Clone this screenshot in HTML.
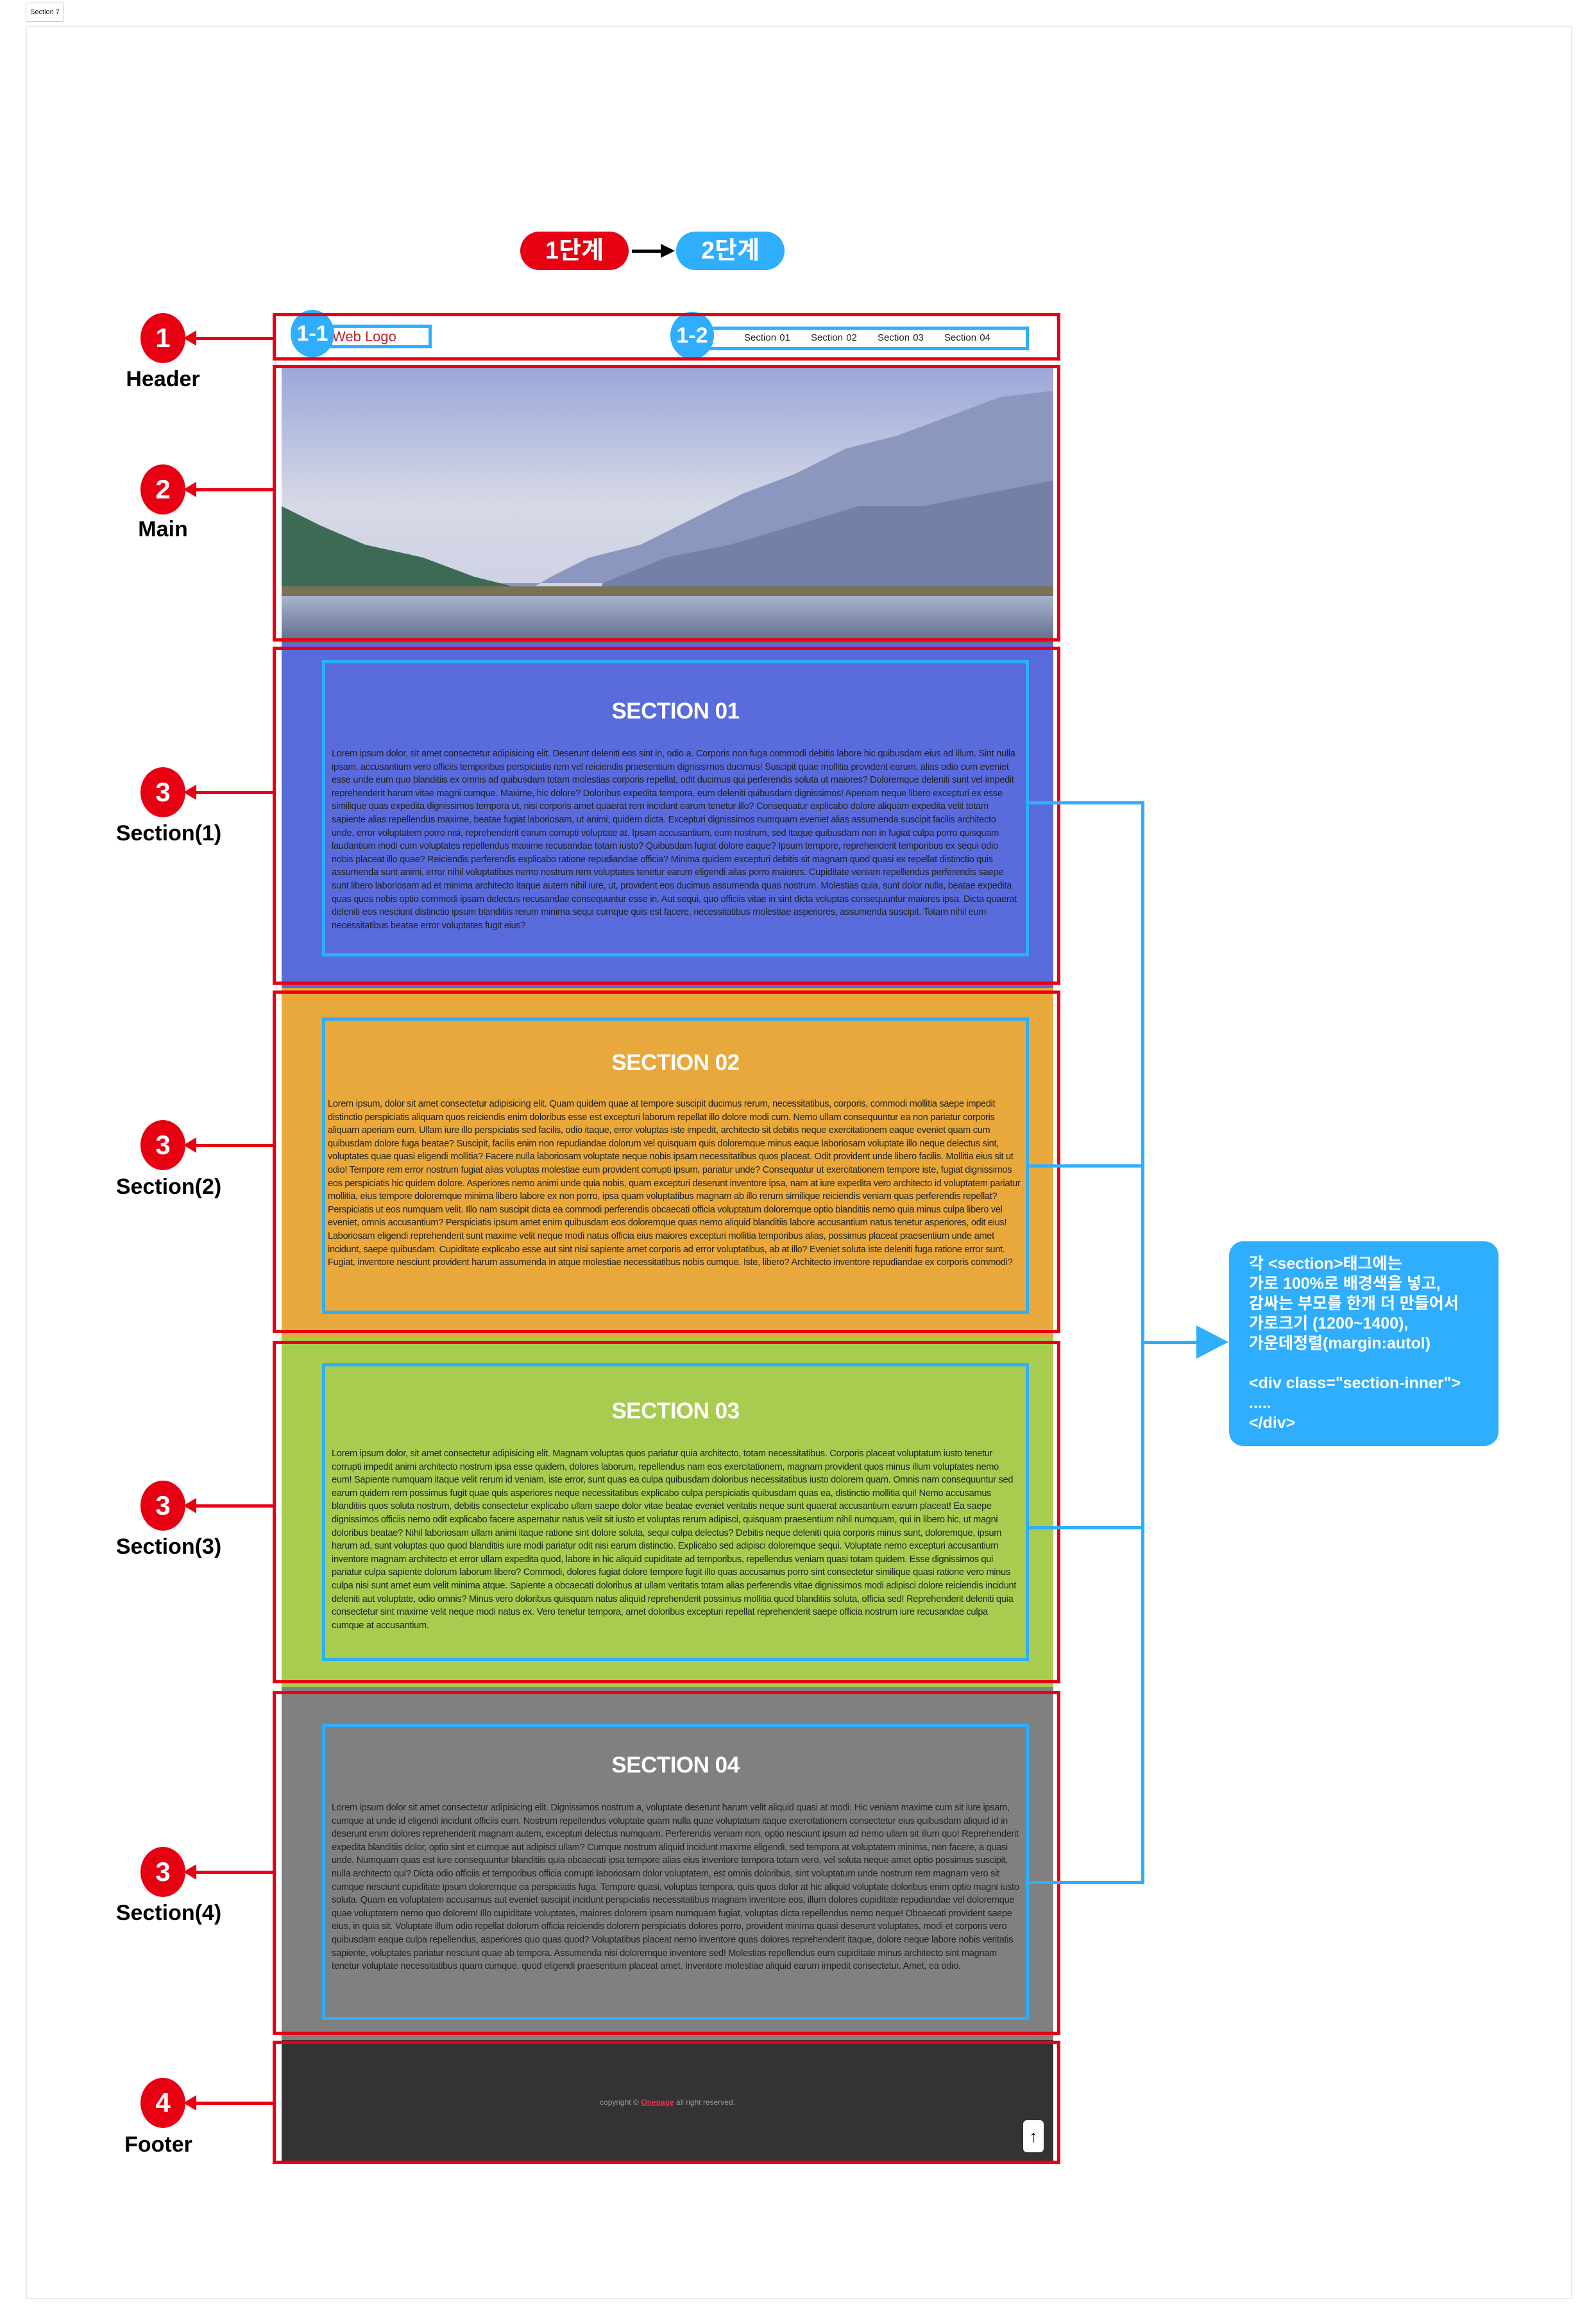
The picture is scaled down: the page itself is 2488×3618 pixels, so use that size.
<!DOCTYPE html>
<html><head><meta charset="utf-8"><style>
*{margin:0;padding:0;box-sizing:border-box}
body{width:2488px;height:3618px;background:#fff;position:relative;font-family:"Liberation Sans","Noto Sans CJK KR",sans-serif;overflow:hidden}
.a{position:absolute}
.red{position:absolute;border:5px solid #e60012}
.inner{position:absolute;border:5px solid #2eaefc;left:502px;width:1102px;padding:0 10px}
.inner h2{color:#fff;font-size:35px;font-weight:bold;text-align:center;letter-spacing:-0.5px}
.inner p{font-size:14.6px;line-height:20.6px;color:#222;letter-spacing:-0.3px}
.circ{position:absolute;width:70px;height:78px;border-radius:50%;background:#e60012;color:#fff;font-weight:bold;font-size:42px;text-align:center;line-height:78px;left:219px}
.lbl{position:absolute;font-weight:bold;font-size:34px;color:#000;text-align:center;width:300px;left:104px}
.arr{position:absolute;left:290px;width:135px;height:5px;background:#e60012}
.arr:before{content:"";position:absolute;left:-4px;top:-10px;border-right:20px solid #e60012;border-top:12px solid transparent;border-bottom:12px solid transparent}
.bl{position:absolute;background:#2eaefc}
.badge{position:absolute;background:#2eaefc;color:#fff;font-weight:bold;font-size:34px;border-radius:50%;text-align:center;width:68px;height:74px;line-height:74px}
</style></head><body>
<div class="a" style="left:40px;top:4px;width:60px;height:30px;border:1px solid #ccc;border-radius:3px;font-size:11px;line-height:28px;text-align:center;color:#222">Section 7</div>
<div class="a" style="left:40px;top:40px;width:2411px;height:3544px;border:2px solid #ececec"></div>

<div class="a" style="left:811px;top:361px;width:169px;height:60px;border-radius:30px;background:#e60012;color:#fff;font-weight:bold;font-size:38px;text-align:center;line-height:60px">1단계</div>
<div class="a" style="left:985px;top:389px;width:50px;height:5px;background:#000"></div>
<div class="a" style="left:1030px;top:380px;border-left:22px solid #000;border-top:11px solid transparent;border-bottom:11px solid transparent"></div>
<div class="a" style="left:1054px;top:361px;width:169px;height:60px;border-radius:30px;background:#2eaefc;color:#fff;font-weight:bold;font-size:38px;text-align:center;line-height:60px">2단계</div>

<div class="a" style="left:439px;top:569px;width:1203px;height:434px;overflow:hidden">
<svg width="1203" height="434" viewBox="0 0 1203 434" preserveAspectRatio="none">
<defs><linearGradient id="sk" x1="0" y1="0" x2="0" y2="1"><stop offset="0" stop-color="#9aa6d8"/><stop offset="0.5" stop-color="#d6d9e6"/><stop offset="1" stop-color="#c8cde0"/></linearGradient>
<linearGradient id="wt" x1="0" y1="0" x2="0" y2="1"><stop offset="0" stop-color="#a9b3cc"/><stop offset="1" stop-color="#5d6a8a"/></linearGradient></defs>
<rect width="1203" height="434" fill="url(#sk)"/>
<path d="M0 230 L40 240 L120 300 L200 330 L300 350 L370 360 L420 330 L480 300 L560 280 L640 240 L720 200 L800 170 L880 130 L960 110 L1040 80 L1120 50 L1203 40 L1203 340 L0 340Z" fill="#8c97c0"/>
<path d="M0 220 L60 250 L130 280 L220 300 L300 330 L380 350 L420 360 L0 360Z" fill="#3d6a55"/>
<path d="M500 340 L600 300 L700 280 L800 250 L900 220 L1000 220 L1100 200 L1203 180 L1203 360 L500 360Z" fill="#7480a8"/>
<rect y="345" width="1203" height="18" fill="#7a7256"/>
<rect y="360" width="1203" height="74" fill="url(#wt)"/>
</svg></div>
<div class="a" style="left:439px;top:1003px;width:1203px;height:537px;background:#5a6bdc"></div>
<div class="a" style="left:439px;top:1540px;width:1203px;height:545px;background:#e8a83c"></div>
<div class="a" style="left:439px;top:2085px;width:1203px;height:545px;background:#a8cc50"></div>
<div class="a" style="left:439px;top:2630px;width:1203px;height:550px;background:#808080"></div>
<div class="a" style="left:439px;top:3180px;width:1203px;height:193px;background:#333"></div>
<div class="a" style="left:439px;top:3270px;width:1203px;text-align:center;font-size:12px;color:#999">copyright © <span style="color:#e0304a;text-decoration:underline;font-weight:bold">Onepage</span> all right reserved.</div>
<div class="a" style="left:1595px;top:3305px;width:32px;height:50px;background:#fff;border-radius:6px;text-align:center;font-size:26px;line-height:50px;color:#000">↑</div>

<div class="a" style="left:513px;top:506px;width:160px;height:37px;border:5px solid #2eaefc"></div>
<div class="a" style="left:518px;top:512px;font-size:22px;color:#c0202a">Web Logo</div>
<div class="a" style="left:1098px;top:509px;width:506px;height:37px;border:5px solid #2eaefc"></div>
<div class="a" style="left:1160px;top:518px;font-size:15px;color:#222;word-spacing:1px;white-space:nowrap"><span style="display:inline-block;width:104px">Section 01</span><span style="display:inline-block;width:104px">Section 02</span><span style="display:inline-block;width:104px">Section 03</span><span>Section 04</span></div>
<div class="badge" style="left:453px;top:483px">1-1</div>
<div class="badge" style="left:1045px;top:486px">1-2</div>

<div class="inner" style="top:1029px;height:462px"><h2 style="margin-top:55px">SECTION 01</h2><p style="margin-top:36px">Lorem ipsum dolor, sit amet consectetur adipisicing elit. Deserunt deleniti eos sint in, odio a. Corporis non fuga commodi debitis labore hic quibusdam eius ad illum. Sint nulla ipsam, accusantium vero officiis temporibus perspiciatis rem vel reiciendis praesentium dignissimos ducimus! Suscipit quae mollitia provident earum, alias odio cum eveniet esse unde eum quo blanditiis ex omnis ad quibusdam totam molestias corporis repellat, odit ducimus qui perferendis soluta ut maiores? Doloremque deleniti sunt vel impedit reprehenderit harum vitae magni cumque. Maxime, hic dolore? Doloribus expedita tempora, eum deleniti quibusdam dignissimos! Aperiam neque libero excepturi ex esse similique quas expedita dignissimos tempora ut, nisi corporis amet quaerat rem incidunt earum tenetur illo? Consequatur explicabo dolore aliquam expedita velit totam sapiente alias repellendus maxime, beatae fugiat laboriosam, ut animi, quidem dicta. Excepturi dignissimos numquam eveniet alias assumenda suscipit facilis architecto unde, error voluptatem porro nisi, reprehenderit earum corrupti voluptate at. Ipsam accusantium, eum nostrum, sed itaque quibusdam non in fugiat culpa porro quisquam laudantium modi cum voluptates repellendus maxime recusandae totam iusto? Quibusdam fugiat dolore eaque? Ipsum tempore, reprehenderit temporibus ex sequi odio nobis placeat illo quae? Reiciendis perferendis explicabo ratione repudiandae officia? Minima quidem excepturi debitis sit magnam quod quasi ex repellat distinctio quis assumenda sunt animi, error nihil voluptatibus nemo nostrum rem voluptates tenetur earum eligendi alias porro maiores. Cupiditate veniam repellendus perferendis saepe sunt libero laboriosam ad et minima architecto itaque autem nihil iure, ut, provident eos ducimus assumenda quas nostrum. Molestias quia, sunt dolor nulla, beatae expedita quas quos nobis optio commodi ipsam delectus recusandae consequuntur esse in. Aut sequi, quo officiis vitae in sint dicta voluptas consequuntur maiores ipsa. Dicta quaerat deleniti eos nesciunt distinctio ipsum blanditiis rerum minima sequi cumque quis est facere, necessitatibus molestiae asperiores, assumenda suscipit. Totam nihil eum necessitatibus beatae error voluptates fugit eius?</p></div>

<div class="inner" style="top:1586px;height:462px;padding:0 4px"><h2 style="margin-top:46px">SECTION 02</h2><p style="margin-top:34px">Lorem ipsum, dolor sit amet consectetur adipisicing elit. Quam quidem quae at tempore suscipit ducimus rerum, necessitatibus, corporis, commodi mollitia saepe impedit distinctio perspiciatis aliquam quos reiciendis enim doloribus esse est excepturi laborum repellat illo dolore modi cum. Nemo ullam consequuntur ea non pariatur corporis aliquam aperiam eum. Ullam iure illo perspiciatis sed facilis, odio itaque, error voluptas iste impedit, architecto sit debitis neque exercitationem eaque eveniet quam cum quibusdam dolore fuga beatae? Suscipit, facilis enim non repudiandae dolorum vel quisquam quis doloremque minus eaque laboriosam voluptate illo neque delectus sint, voluptates quae quasi eligendi mollitia? Facere nulla laboriosam voluptate neque nobis ipsam necessitatibus quos placeat. Odit provident unde libero facilis. Mollitia eius sit ut odio! Tempore rem error nostrum fugiat alias voluptas molestiae eum provident corrupti ipsum, pariatur unde? Consequatur ut exercitationem tempore iste, fugiat dignissimos eos perspiciatis hic quidem dolore. Asperiores nemo animi unde quia nobis, quam excepturi deserunt inventore ipsa, nam at iure expedita vero architecto id voluptatem pariatur mollitia, eius tempore doloremque minima libero labore ex non porro, ipsa quam voluptatibus magnam ab illo rerum similique reiciendis veniam quas perferendis repellat? Perspiciatis ut eos numquam velit. Illo nam suscipit dicta ea commodi perferendis obcaecati officia voluptatum doloremque optio blanditiis nemo quia minus culpa libero vel eveniet, omnis accusantium? Perspiciatis ipsum amet enim quibusdam eos doloremque quas nemo aliquid blanditiis labore accusantium natus tenetur asperiores, odit eius! Laboriosam eligendi reprehenderit sunt maxime velit neque modi natus officia eius maiores excepturi mollitia temporibus alias, possimus placeat praesentium unde amet incidunt, saepe quibusdam. Cupiditate explicabo esse aut sint nisi sapiente amet corporis ad error voluptatibus, ab at illo? Eveniet soluta iste deleniti fuga ratione error sunt. Fugiat, inventore nesciunt provident harum assumenda in atque molestiae necessitatibus nobis cumque. Iste, libero? Architecto inventore repudiandae ex corporis commodi?</p></div>

<div class="inner" style="top:2125px;height:464px"><h2 style="margin-top:50px">SECTION 03</h2><p style="margin-top:36px">Lorem ipsum dolor, sit amet consectetur adipisicing elit. Magnam voluptas quos pariatur quia architecto, totam necessitatibus. Corporis placeat voluptatum iusto tenetur corrupti impedit animi architecto nostrum ipsa esse quidem, dolores laborum, repellendus nam eos exercitationem, magnam provident quos minus illum voluptates nemo eum! Sapiente numquam itaque velit rerum id veniam, iste error, sunt quas ea culpa quibusdam doloribus necessitatibus iusto dolorem quam. Omnis nam consequuntur sed earum quidem rem possimus fugit quae quis asperiores neque necessitatibus explicabo culpa perspiciatis quibusdam quas ea, distinctio mollitia qui! Nemo accusamus blanditiis quos soluta nostrum, debitis consectetur explicabo ullam saepe dolor vitae beatae eveniet veritatis neque sunt quaerat accusantium earum placeat! Ea saepe dignissimos officiis nemo odit explicabo facere aspernatur natus velit sit iusto et voluptas rerum adipisci, quisquam praesentium nihil numquam, qui in libero hic, ut magni doloribus beatae? Nihil laboriosam ullam animi itaque ratione sint dolore soluta, sequi culpa delectus? Debitis neque deleniti quia corporis minus sunt, doloremque, ipsum harum ad, sunt voluptas quo quod blanditiis iure modi pariatur odit nisi earum distinctio. Explicabo sed adipisci doloremque sequi. Voluptate nemo excepturi accusantium inventore magnam architecto et error ullam expedita quod, labore in hic aliquid cupiditate ad temporibus, repellendus veniam quasi totam quidem. Esse dignissimos qui pariatur culpa sapiente dolorum laborum libero? Commodi, dolores fugiat dolore tempore fugit illo quas accusamus porro sint consectetur similique quasi ratione vero minus culpa nisi sunt amet eum velit minima atque. Sapiente a obcaecati doloribus at ullam veritatis totam alias perferendis vitae dignissimos modi adipisci dolore reiciendis incidunt deleniti aut voluptate, odio omnis? Minus vero doloribus quisquam natus aliquid reprehenderit possimus mollitia quod blanditiis soluta, officia sed! Reprehenderit deleniti quia consectetur sint maxime velit neque modi natus ex. Vero tenetur tempora, amet doloribus excepturi repellat reprehenderit saepe officia nostrum iure recusandae culpa cumque at accusantium.</p></div>

<div class="inner" style="top:2687px;height:462px"><h2 style="margin-top:40px">SECTION 04</h2><p style="margin-top:36px">Lorem ipsum dolor sit amet consectetur adipisicing elit. Dignissimos nostrum a, voluptate deserunt harum velit aliquid quasi at modi. Hic veniam maxime cum sit iure ipsam, cumque at unde id eligendi incidunt officiis eum. Nostrum repellendus voluptate quam nulla quae voluptatum itaque exercitationem consectetur eius quibusdam aliquid id in deserunt enim dolores reprehenderit magnam autem, excepturi delectus numquam. Perferendis veniam non, optio nesciunt ipsum ad nemo ullam sit illum quo! Reprehenderit expedita blanditiis dolor, optio sint et cumque aut adipisci ullam? Cumque nostrum aliquid incidunt maxime eligendi, sed tempora at voluptatem minima, non facere, a quasi unde. Numquam quas est iure consequuntur blanditiis quia obcaecati ipsa tempore alias eius inventore tempora totam vero, vel soluta neque amet optio possimus suscipit, nulla architecto qui? Dicta odio officiis et temporibus officia corrupti laboriosam dolor voluptatem, est omnis doloribus, sint voluptatum unde nostrum rem magnam vero sit cumque nesciunt cupiditate ipsum doloremque ea perspiciatis fuga. Tempore quasi, voluptas tempora, quis quos dolor at hic aliquid voluptate doloribus enim optio magni iusto soluta. Quam ea voluptatem accusamus aut eveniet suscipit incidunt perspiciatis necessitatibus magnam inventore eos, illum dolores cupiditate repudiandae vel doloremque quae voluptatem nemo quo dolorem! Illo cupiditate voluptates, maiores dolorem ipsam numquam fugiat, voluptas dicta repellendus nemo neque! Obcaecati provident saepe eius, in quia sit. Voluptate illum odio repellat dolorum officia reiciendis dolorem perspiciatis dolores porro, provident minima quasi deserunt voluptates, modi et corporis vero quibusdam eaque culpa repellendus, asperiores quo quas quod? Voluptatibus placeat nemo inventore quas dolores reprehenderit itaque, dolore neque labore nobis veritatis sapiente, voluptates pariatur nesciunt quae ab tempora. Assumenda nisi doloremque inventore sed! Molestias repellendus eum cupiditate minus architecto sint magnam tenetur voluptate necessitatibus quam cumque, quod eligendi praesentium placeat amet. Inventore molestiae aliquid earum impedit consectetur. Amet, ea odio.</p></div>

<div class="red" style="left:425px;top:488px;width:1228px;height:74px"></div>
<div class="red" style="left:425px;top:569px;width:1228px;height:431px"></div>
<div class="red" style="left:425px;top:1008px;width:1228px;height:527px"></div>
<div class="red" style="left:425px;top:1544px;width:1228px;height:534px"></div>
<div class="red" style="left:425px;top:2090px;width:1228px;height:534px"></div>
<div class="red" style="left:425px;top:2636px;width:1228px;height:536px"></div>
<div class="red" style="left:425px;top:3181px;width:1228px;height:192px"></div>

<div class="circ" style="top:488px">1</div><div class="arr" style="top:525px"></div><div class="lbl" style="top:572px">Header</div>
<div class="circ" style="top:724px">2</div><div class="arr" style="top:761px"></div><div class="lbl" style="top:806px">Main</div>
<div class="circ" style="top:1196px">3</div><div class="arr" style="top:1233px"></div><div class="lbl" style="top:1280px;left:113px">Section(1)</div>
<div class="circ" style="top:1746px">3</div><div class="arr" style="top:1783px"></div><div class="lbl" style="top:1831px;left:113px">Section(2)</div>
<div class="circ" style="top:2308px">3</div><div class="arr" style="top:2345px"></div><div class="lbl" style="top:2392px;left:113px">Section(3)</div>
<div class="circ" style="top:2879px">3</div><div class="arr" style="top:2916px"></div><div class="lbl" style="top:2963px;left:113px">Section(4)</div>
<div class="circ" style="top:3239px">4</div><div class="arr" style="top:3276px"></div><div class="lbl" style="top:3324px;left:97px">Footer</div>

<div class="bl" style="left:1604px;top:1249px;width:180px;height:5px"></div>
<div class="bl" style="left:1604px;top:1815px;width:180px;height:5px"></div>
<div class="bl" style="left:1604px;top:2379px;width:180px;height:5px"></div>
<div class="bl" style="left:1604px;top:2932px;width:180px;height:5px"></div>
<div class="bl" style="left:1779px;top:1249px;width:5px;height:1688px"></div>
<div class="bl" style="left:1779px;top:2090px;width:90px;height:5px"></div>
<div class="a" style="left:1865px;top:2066px;border-left:50px solid #2eaefc;border-top:26px solid transparent;border-bottom:26px solid transparent"></div>
<div class="a" style="left:1916px;top:1935px;width:420px;height:319px;background:#2eaefc;border-radius:22px;color:#fff;font-weight:bold;font-size:25px;line-height:31px;padding:20px 0 0 31px;white-space:nowrap">각 &lt;section&gt;태그에는<br>가로 100%로 배경색을 넣고,<br>감싸는 부모를 한개 더 만들어서<br>가로크기 (1200~1400),<br>가운데정렬(margin:autol)<br><br>&lt;div class="section-inner"&gt;<br>.....<br>&lt;/div&gt;</div>
</body></html>
